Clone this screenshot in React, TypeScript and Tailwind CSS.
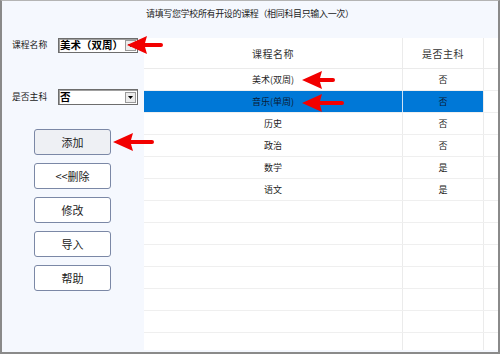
import React from "react";

const FONT = { fontFamily: '"Noto Sans CJK SC", "Noto Sans", sans-serif' };

function RedArrow({ left, cy, len }: { left: number; cy: number; len: number }) {
  const h = 18;
  const m = h / 2;
  const d = `M0,${m} L20,0 L18,${m - 2} L${len - 2},${m - 2} A2,2 0 0 1 ${len - 2},${m + 2} L18,${m + 2} L20,${h} Z`;
  return (
    <svg
      className="absolute"
      style={{ left, top: cy - m }}
      width={len}
      height={h}
      viewBox={`0 0 ${len} ${h}`}
    >
      <path d={d} fill="#f20000" />
    </svg>
  );
}

function Select({ value }: { value: string }) {
  return (
    <div className="flex h-full w-[80px] items-center border border-[#6d6d6d] bg-white shadow-[inset_1px_1px_0_#a0a0a0]">
      <span className="flex-1 pl-[1px] text-[10.5px] font-bold leading-none text-black">{value}</span>
      <div className="mr-[1px] flex h-[11px] w-[11px] items-center justify-center border border-[#9a9a9a] bg-[#ececec]">
        <svg width="5" height="3" viewBox="0 0 5 3">
          <path d="M0,0 L5,0 L2.5,3 Z" fill="#000" />
        </svg>
      </div>
    </div>
  );
}

const rows: [string, string][] = [
  ["美术(双周)", "否"],
  ["音乐(单周)", "否"],
  ["历史", "否"],
  ["政治", "否"],
  ["数学", "是"],
  ["语文", "是"],
  ["", ""],
  ["", ""],
  ["", ""],
  ["", ""],
  ["", ""],
  ["", ""],
  ["", ""],
];

export default function App() {
  const buttons = ["添加", "<<删除", "修改", "导入", "帮助"];
  return (
    <div
      className="relative flex h-[354px] w-[500px] overflow-hidden border-2 border-t border-[#8a8a8a] border-t-[#b4b4b4] bg-[#f5f8fe]"
      style={FONT}
    >
      {/* left panel */}
      <div className="flex w-[142px] flex-col pt-[37px]">
        <div className="flex h-[15px] items-center">
          <span className="w-[56px] pl-[10px] text-[8.8px] leading-none text-[#222]">课程名称</span>
          <Select value="美术（双周）" />
        </div>
        <div className="mt-[36px] flex h-[16px] items-center">
          <span className="w-[56px] pl-[10px] text-[8.8px] leading-none text-[#222]">是否主科</span>
          <Select value="否" />
        </div>
        <div className="ml-[32px] mt-[24px] flex flex-col gap-[8px]">
          {buttons.map((b, i) => (
            <div
              key={b}
              className={`flex h-[26px] w-[77px] items-center justify-center rounded-[3px] border border-[#7b88a6] text-[11px] leading-none text-[#222] ${
                i === 0 ? "bg-[#eef0f4]" : "bg-white"
              }`}
            >
              {b}
            </div>
          ))}
        </div>
      </div>

      {/* right column */}
      <div className="flex w-[354px] flex-col">
        <div className="h-[37px] pl-[2px] pt-[7px] text-[9px] leading-[12px] tracking-[-0.35px] text-[#222]">
          请填写您学校所有开设的课程（相同科目只输入一次）
        </div>
        <div className="h-[312px] overflow-hidden bg-white">
          <div className="flex h-[31px] border-b border-[#ebebeb] text-[10px] tracking-[0.5px] text-[#333]">
            <div className="flex w-[258px] items-center justify-center">课程名称</div>
            <div className="flex w-[81px] items-center justify-center border-l border-[#ebebeb]">是否主科</div>
            <div className="flex-1 border-l border-[#ebebeb]" />
          </div>
          {rows.map(([a, b], i) => {
            const sel = i === 1;
            return (
              <div key={i} className="flex h-[22px] border-b border-[#efefef] text-[9px] text-[#222]">
                <div
                  className={`flex w-[258px] items-center justify-center ${sel ? "bg-[#0078d7] text-[#0b1a35]" : ""}`}
                >
                  {a}
                </div>
                <div
                  className={`flex w-[81px] items-center justify-center border-l ${
                    sel ? "border-[#cfe2f5] bg-[#0078d7] text-[#0b1a35]" : "border-[#ebebeb]"
                  }`}
                >
                  {b}
                </div>
                <div className="flex-1 border-l border-[#ebebeb]" />
              </div>
            );
          })}
        </div>
      </div>

      {/* red arrows (overlays) */}
      <RedArrow left={125} cy={44} len={36} />
      <RedArrow left={300} cy={79} len={33} />
      <RedArrow left={300} cy={102} len={42} />
      <RedArrow left={111} cy={141} len={41} />
    </div>
  );
}
